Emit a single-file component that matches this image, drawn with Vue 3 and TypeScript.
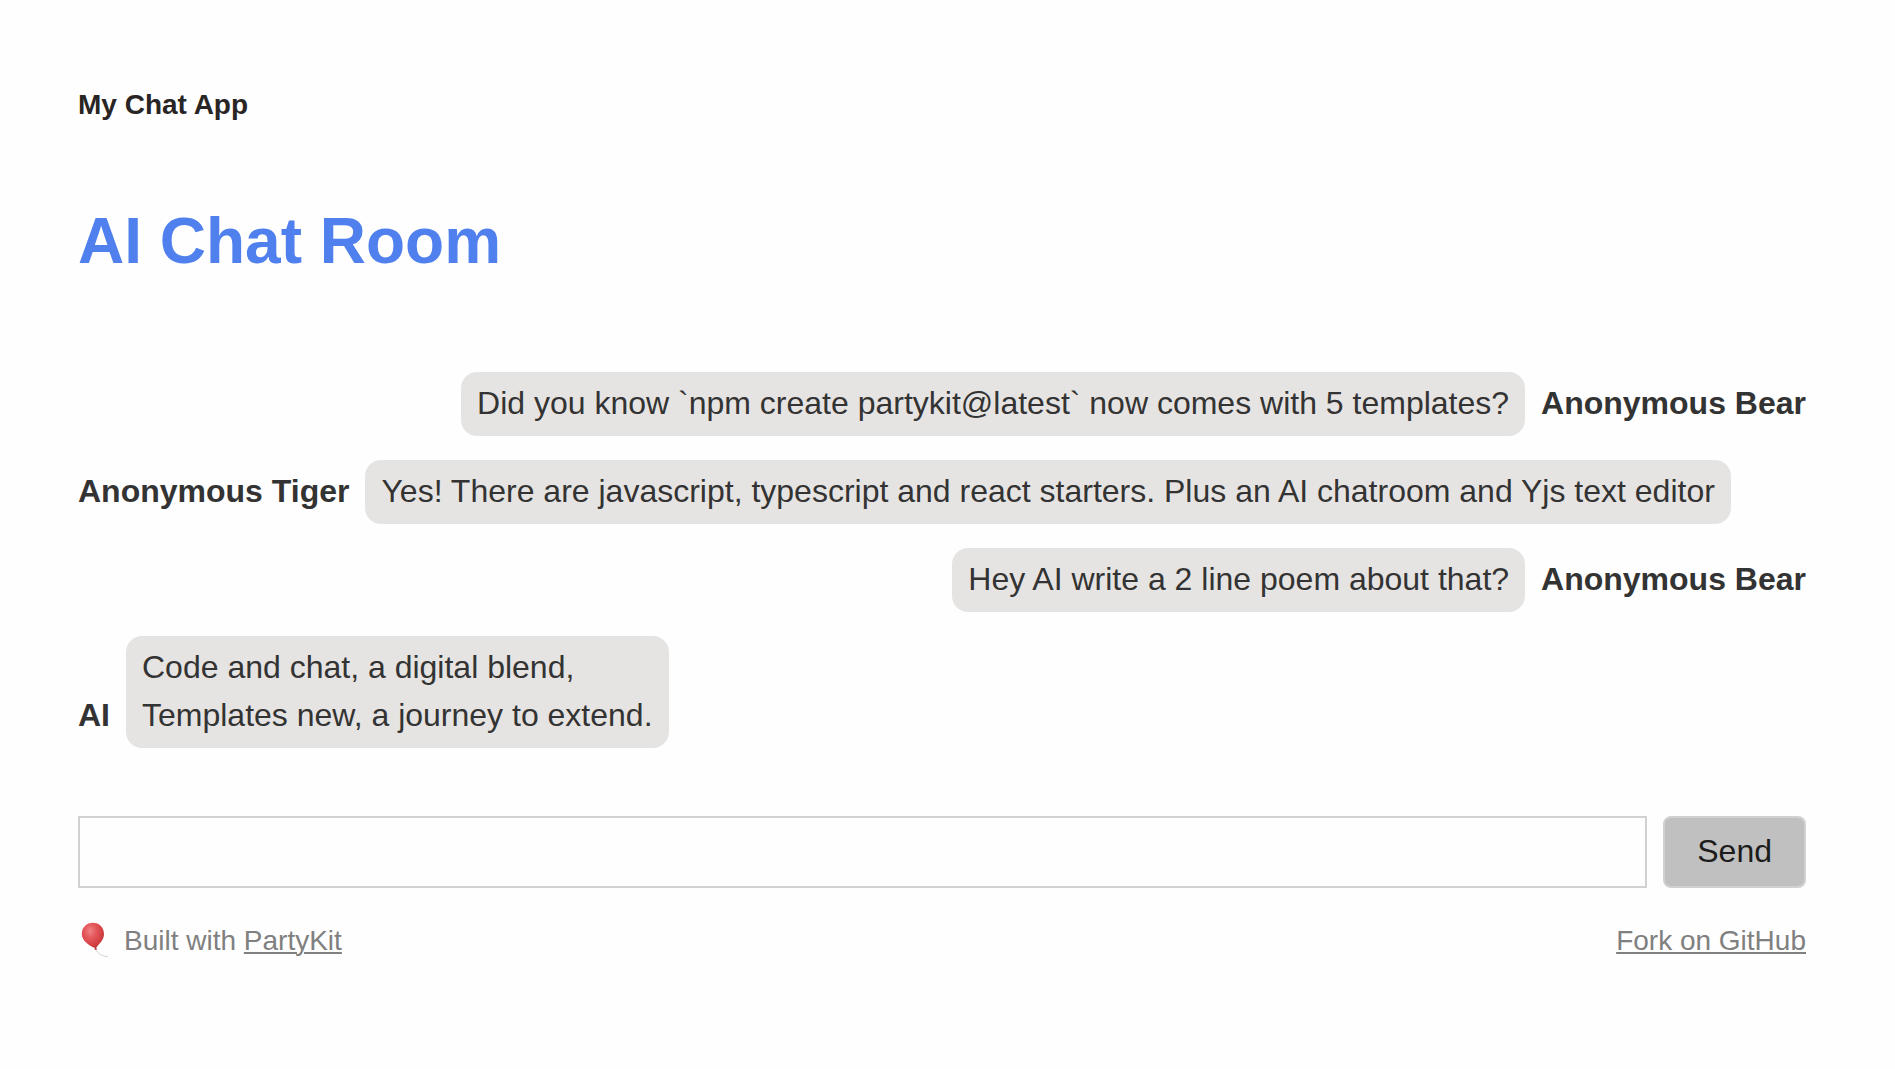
<script setup lang="ts">
import { ref } from 'vue'

interface Message {
  id: number
  from: string
  text: string
  own: boolean
}

const messages = ref<Message[]>([
  { id: 1, from: 'Anonymous Bear', text: 'Did you know `npm create partykit@latest` now comes with 5 templates?', own: true },
  { id: 2, from: 'Anonymous Tiger', text: 'Yes! There are javascript, typescript and react starters. Plus an AI chatroom and Yjs text editor', own: false },
  { id: 3, from: 'Anonymous Bear', text: 'Hey AI write a 2 line poem about that?', own: true },
  { id: 4, from: 'AI', text: 'Code and chat, a digital blend,\nTemplates new, a journey to extend.', own: false },
])

const draft = ref('')

function send(): void {
  const text = draft.value.trim()
  if (!text) return
  messages.value.push({ id: messages.value.length + 1, from: 'Anonymous Bear', text, own: true })
  draft.value = ''
}
</script>

<template>
  <div class="page">
    <header class="app-name">My Chat App</header>
    <main>
      <h1 class="title">AI Chat Room</h1>
      <ul class="messages">
        <li v-for="m in messages" :key="m.id" class="message" :class="{ own: m.own }">
          <strong class="author">{{ m.from }}</strong>
          <p class="bubble">{{ m.text }}</p>
        </li>
      </ul>
      <form class="composer" @submit.prevent="send">
        <input v-model="draft" class="field" type="text" aria-label="Message" autocomplete="off" />
        <button class="send" type="submit">Send</button>
      </form>
    </main>
    <footer class="footer">
      <div class="credit">
        <svg class="balloon" viewBox="0 0 32 38" aria-hidden="true">
          <defs>
            <radialGradient id="balloon-fill" cx="0.38" cy="0.3" r="0.75">
              <stop offset="0" stop-color="#f08386" />
              <stop offset="0.35" stop-color="#e4585c" />
              <stop offset="0.75" stop-color="#d23e42" />
              <stop offset="1" stop-color="#a53236" />
            </radialGradient>
          </defs>
          <path d="M17.500 27C19.500 31.500 24 34.500 30 34.500" fill="none" stroke="#d2d2d2" stroke-width="1" />
          <path d="M14.900 0.800C21.200 0.800 26 5.600 26 12C26 18.500 21 21.500 18.200 26L19 27.800H16.600L16.800 26C11 23.400 3.800 18.600 3.800 12C3.800 5.600 8.600 0.800 14.900 0.800Z" fill="url(#balloon-fill)" />
        </svg>
        <span>Built with <a href="https://partykit.io">PartyKit</a></span>
      </div>
      <a href="https://github.com/partykit">Fork on GitHub</a>
    </footer>
  </div>
</template>

<style>
body {
  margin: 0;
  background: #fefefe;
}
</style>

<style scoped>
.page {
  box-sizing: border-box;
  padding: 85px 89px 84px 78px;
  font-family: "Liberation Sans", Arial, Helvetica, sans-serif;
  font-size: 32px;
  line-height: 48px;
  color: #333;
}

.app-name {
  font-size: 28px;
  line-height: 40px;
  font-weight: 700;
  color: #292524;
}

.title {
  margin: 76px 0 91px;
  font-size: 64px;
  line-height: 80px;
  font-weight: 700;
  color: #4f80ee;
}

.messages {
  display: flex;
  flex-direction: column;
  gap: 24px;
  margin: 0;
  padding: 0;
  list-style: none;
}

.message {
  display: flex;
  align-items: flex-end;
  gap: 16px;
}

.message.own {
  flex-direction: row-reverse;
}

.author {
  flex: none;
  padding: 7px 0 9px;
}

.bubble {
  margin: 0;
  padding: 7px 16px 9px;
  border-radius: 16px;
  background: #e6e4e2;
  white-space: pre-line;
}

.composer {
  display: flex;
  gap: 16px;
  margin-top: 68px;
}

.field,
.send {
  box-sizing: border-box;
  height: 72px;
  margin: 0;
  border: 2px solid #d1d1d1;
  font: inherit;
}

.field {
  flex: 1;
  min-width: 0;
  padding: 0 16px;
  border-radius: 0;
  background: transparent;
  color: #333;
}

.send {
  padding: 0 32px 2px;
  border-radius: 8px;
  background: #c0c0c0;
  color: #1c1c1c;
  cursor: pointer;
}

.footer {
  display: flex;
  justify-content: space-between;
  align-items: center;
  margin-top: 33px;
  font-size: 28px;
  line-height: 40px;
  color: #808080;
}

.footer a {
  color: inherit;
  text-decoration: underline;
  text-decoration-thickness: 2px;
  text-underline-offset: 2px;
}

.credit {
  display: flex;
  align-items: center;
  gap: 14px;
}

.balloon {
  width: 32px;
  height: 38px;
}
</style>
